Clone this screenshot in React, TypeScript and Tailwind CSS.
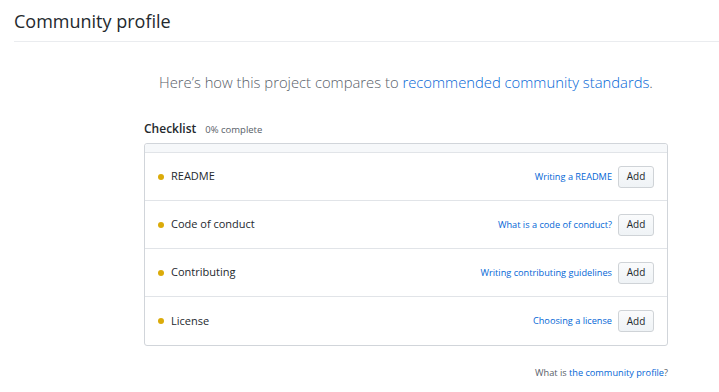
import React from 'react';

const items = [
  { name: 'README', help: 'Writing a README' },
  { name: 'Code of conduct', help: 'What is a code of conduct?' },
  { name: 'Contributing', help: 'Writing contributing guidelines' },
  { name: 'License', help: 'Choosing a license' },
];

const App: React.FC = () => {
  return (
    <div className="min-h-screen bg-white text-[#24292e] font-['Open_Sans',sans-serif]">
      <div className="pl-[14px] pt-[9px]">
        <h2 className="text-[18px] leading-[24px] pb-[8px] border-b border-[#eaecef]">Community profile</h2>
      </div>

      <div className="w-[524px] ml-[144px]">
        <p className="mt-[29px] text-center text-[14.8px] font-light text-[#586069]">
          Here’s how this project compares to{' '}
          <a href="#" className="text-[#0366d6]">recommended community standards</a>.
        </p>

        <div className="mt-[27px] flex items-baseline gap-[9px]">
          <h3 className="text-[12px] font-semibold">Checklist</h3>
          <span className="text-[9.5px] text-[#586069]">0% complete</span>
        </div>

        <div className="mt-[5px] border border-[#d1d5da] rounded-[3px]">
          <div className="h-[9px] bg-[#f6f8fa] border-b border-[#e1e4e8] rounded-t-[3px]" />
          {items.map((item, i) => (
            <div
              key={item.name}
              className={`h-[48px] flex items-center pl-[13px] pr-[13px] ${i < items.length - 1 ? 'border-b border-[#e1e4e8]' : ''}`}
            >
              <span className="w-[6px] h-[6px] rounded-full bg-[#dbab09]" />
              <span className="ml-[7px] text-[11px]">{item.name}</span>
              <a href="#" className="ml-auto text-[9.2px] text-[#0366d6]">{item.help}</a>
              <button className="ml-[6px] w-[36px] h-[22px] text-[10px] border border-[#cfd3d7] rounded-[3px] bg-gradient-to-b from-[#fafbfc] to-[#eff3f6]">
                Add
              </button>
            </div>
          ))}
        </div>

        <p className="mt-[20px] text-right text-[9.2px] text-[#586069]">
          What is <a href="#" className="text-[#0366d6]">the community profile</a>?
        </p>
      </div>
    </div>
  );
};

export default App;
